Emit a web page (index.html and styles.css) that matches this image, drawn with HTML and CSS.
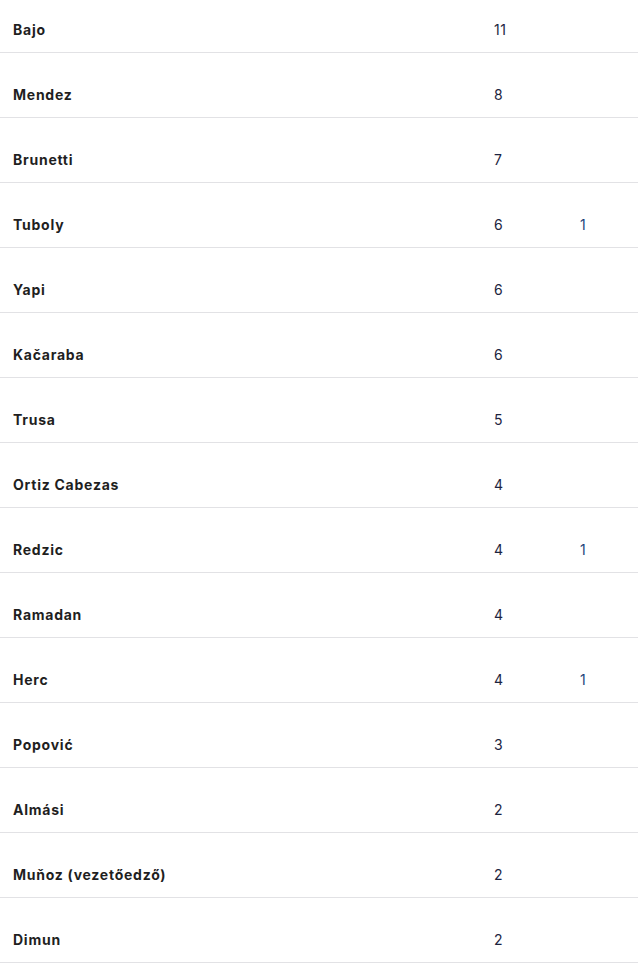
FILE: index.html
```html
<!DOCTYPE html>
<html lang="hu">
<head>
<meta charset="utf-8">
<link rel="stylesheet" href="styles.css">
</head>
<body>
<div class="list">
  <div class="row"><span class="name">Bajo</span><span class="num">11</span><span class="num2"></span></div>
  <div class="row"><span class="name">Mendez</span><span class="num">8</span><span class="num2"></span></div>
  <div class="row"><span class="name">Brunetti</span><span class="num">7</span><span class="num2"></span></div>
  <div class="row"><span class="name">Tuboly</span><span class="num">6</span><span class="num2">1</span></div>
  <div class="row"><span class="name">Yapi</span><span class="num">6</span><span class="num2"></span></div>
  <div class="row"><span class="name">Kačaraba</span><span class="num">6</span><span class="num2"></span></div>
  <div class="row"><span class="name">Trusa</span><span class="num">5</span><span class="num2"></span></div>
  <div class="row"><span class="name">Ortiz Cabezas</span><span class="num">4</span><span class="num2"></span></div>
  <div class="row"><span class="name">Redzic</span><span class="num">4</span><span class="num2">1</span></div>
  <div class="row"><span class="name">Ramadan</span><span class="num">4</span><span class="num2"></span></div>
  <div class="row"><span class="name">Herc</span><span class="num">4</span><span class="num2">1</span></div>
  <div class="row"><span class="name">Popović</span><span class="num">3</span><span class="num2"></span></div>
  <div class="row"><span class="name">Almási</span><span class="num">2</span><span class="num2"></span></div>
  <div class="row"><span class="name">Muňoz (vezetőedző)</span><span class="num">2</span><span class="num2"></span></div>
  <div class="row"><span class="name">Dimun</span><span class="num">2</span><span class="num2"></span></div>
</div>
</body>
</html>
```
FILE: styles.css
```css
html, body {
  margin: 0;
  padding: 0;
  background: #ffffff;
}
body {
  font-family: Inter, "Noto Sans", sans-serif;
  overflow: hidden;
}
.list {
  margin-top: -12px;
}
.row {
  display: grid;
  grid-template-columns: 494px 86px 1fr;
  height: 64px;
  box-sizing: content-box;
  border-bottom: 1px solid #e2e2e5;
  align-items: end;
}
.row > span {
  line-height: 20px;
  padding-bottom: 12px;
}
.name {
  padding-left: 13px;
  font-size: 14px;
  font-weight: 700;
  color: #1f1f1f;
  letter-spacing: 0.75px;
}
.num, .num2 {
  font-size: 14px;
  font-weight: 400;
  color: #1d2440;
  letter-spacing: 0.5px;
}
.num2 {
  color: #1f3f7a;
}
```
